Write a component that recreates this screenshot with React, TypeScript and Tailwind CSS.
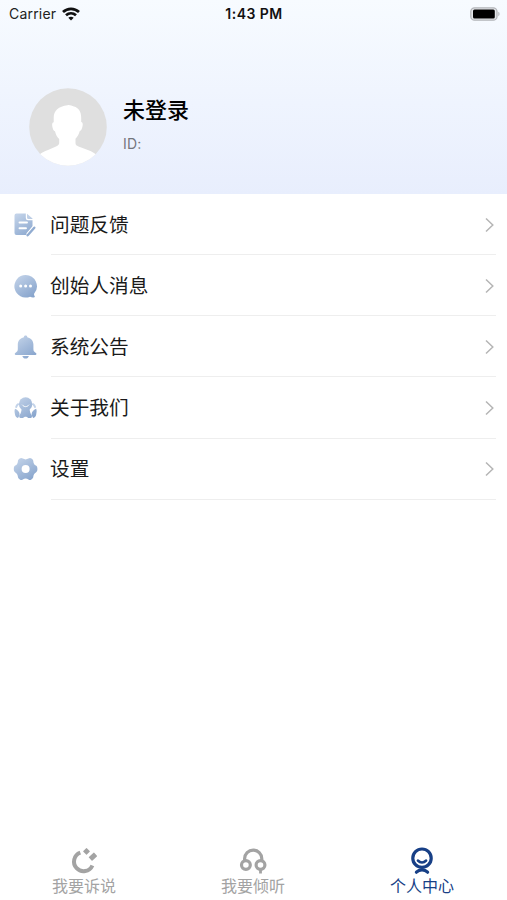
import type { ReactNode } from 'react';

const menu = [
    { label: '问题反馈', icon: <FeedbackIcon /> },
    { label: '创始人消息', icon: <MessageIcon /> },
    { label: '系统公告', icon: <BellIcon /> },
    { label: '关于我们', icon: <AboutIcon /> },
    { label: '设置', icon: <GearIcon /> },
];

const tabs = [
    { label: '我要诉说', icon: <TalkIcon />, active: false },
    { label: '我要倾听', icon: <ListenIcon />, active: false },
    { label: '个人中心', icon: <ProfileIcon />, active: true },
];

function MenuSvg({ id, children }: { id: string; children: ReactNode }) {
    return (
        <svg width="26" height="26" viewBox="0 0 26 26" fill={`url(#${id})`}>
            <defs>
                <linearGradient id={id} gradientUnits="userSpaceOnUse" x1="5" y1="2" x2="20" y2="24">
                    <stop offset="0" stopColor="#c3d3e9" />
                    <stop offset="1" stopColor="#88a5cd" />
                </linearGradient>
            </defs>
            {children}
        </svg>
    );
}

function FeedbackIcon() {
    return (
        <MenuSvg id="feedback">
            <path d="M4.500 1.500H13.800v4.500a2.200 2.200 0 0 0 2.200 2.200h4.500v6.500l-6.500 8.300H4.500a2 2 0 0 1-2-2V3.500a2 2 0 0 1 2-2z" />
            <path d="M15 1.700l5.500 4.800v.5H16.500A1.500 1.500 0 0 1 15 5.500z" opacity=".8" />
            <path d="M7.500 10.500h7.500M7.500 16.300h6.500" stroke="#fff" strokeWidth="1.900" strokeLinecap="round" />
            <path d="M22.500 15.500l-6.500 7.500" stroke="#fff" strokeWidth="4.600" />
            <path d="M22.300 15.700l-5.500 6.300-1.200 1.300" stroke="#91acd1" strokeWidth="2.400" strokeLinecap="round" />
        </MenuSvg>
    );
}

function MessageIcon() {
    return (
        <MenuSvg id="message">
            <path d="M13.600 2a11.300 11.300 0 1 0 4.500 21.700c1.600.8 2.900.9 4.300.5.500-.2.500-.7.200-1.100-.6-.8-.7-1.600-.4-2.500A11.300 11.300 0 0 0 13.600 2z" />
            <g fill="#fff">
                <circle cx="8.700" cy="13" r="1.500" />
                <circle cx="13.600" cy="13" r="1.500" />
                <circle cx="18.500" cy="13" r="1.500" />
            </g>
        </MenuSvg>
    );
}

function BellIcon() {
    return (
        <MenuSvg id="bell">
            <path d="M13.600 1.500c1 0 1.700.7 1.700 1.700 3.700.9 6.100 3.600 6.100 7.300v4.500c0 1.800.6 2.600 2.500 3.900 1 .7.500 2-.5 2H3.800c-1 0-1.500-1.300-.5-2 1.900-1.300 2.500-2.100 2.500-3.900v-4.500c0-3.700 2.400-6.400 6.100-7.300 0-1 .7-1.700 1.700-1.700z" />
            <path d="M10.300 21.900h6.600c-.5 1.600-1.700 2.700-3.300 2.700s-2.800-1.100-3.300-2.700z" />
        </MenuSvg>
    );
}

function AboutIcon() {
    return (
        <MenuSvg id="about">
            <path d="M3 13.800c2.300 1 4.200 2.500 4.500 4.700.2 1.700-.6 3.200-1.500 4.500-1.700-.3-2.700-1.600-3-3.500-.3-1.700-.8-3.800 0-5.700zM24.200 13.800c-2.300 1-4.200 2.500-4.500 4.700-.2 1.700.6 3.200 1.500 4.500 1.700-.3 2.700-1.600 3-3.500.3-1.700.8-3.800 0-5.700z" />
            <path d="M4.200 12c.3-1.300 1-2.200 2-2.800M23 12c-.3-1.300-1-2.200-2-2.800" fill="none" stroke="#c3d3e9" strokeWidth="2" strokeLinecap="round" />
            <path d="M9.600 14h8c.2 2.500.8 4.500 1.900 5.800 1 1.300.5 3.200-.8 3.200H8.500c-1.300 0-1.800-1.900-.8-3.200 1.100-1.300 1.700-3.300 1.900-5.800z" />
            <circle cx="13.600" cy="8.900" r="6.700" />
            <path d="M10.400 10c1.800 2.300 4.600 2.300 6.400 0" fill="none" stroke="#fff" strokeWidth="1" strokeLinecap="round" />
            <path d="M11 23.200c1-2 4.200-2 5.200 0z" fill="#fff" />
        </MenuSvg>
    );
}

function GearIcon() {
    return (
        <MenuSvg id="gear">
            <path
                d="M10.800 2.600c1.800 1.100 3.800 1.100 5.600 0 1.100-.7 2-.7 3 0 1.200.8 1.800 1.400 1.900 2.600.1 2 1.100 3.600 2.600 4.400 1.100.6 1.500 1.700 1.500 3.400s-.4 2.800-1.500 3.400c-1.500.8-2.500 2.400-2.600 4.400-.1 1.200-.7 1.800-1.900 2.600-1 .7-1.900.7-3 0-1.800-1.100-3.800-1.100-5.600 0-1.100.7-2 .7-3 0-1.200-.8-1.800-1.400-1.900-2.600-.1-2-1.100-3.600-2.600-4.400-1.100-.6-1.500-1.700-1.500-3.400s.4-2.800 1.500-3.400c1.500-.8 2.500-2.400 2.600-4.400.1-1.200.7-1.800 1.900-2.600 1-.7 1.900-.7 3 0z"
            />
            <circle cx="13.600" cy="13" r="4" fill="#fff" />
        </MenuSvg>
    );
}

function TalkIcon() {
    return (
        <svg width="30" height="30" viewBox="0 0 30 30" fill="none">
            <path d="M11.300 6.600A9.600 9.600 0 1 0 23.400 19.500" stroke="currentColor" strokeWidth="4" />
            <rect x="15" y="2.900" width="5" height="5" rx=".5" transform="rotate(45 17.500 5.400)" fill="currentColor" />
            <rect x="20.300" y="8.200" width="7.200" height="5" rx=".5" transform="rotate(-42 23.900 10.700)" fill="currentColor" />
        </svg>
    );
}

function ListenIcon() {
    return (
        <svg width="30" height="30" viewBox="0 0 30 30" fill="none" stroke="currentColor" strokeWidth="3.200">
            <path d="M6.600 16v-3.300a8.600 8.600 0 0 1 17.200 0v3.300" />
            <circle cx="7.900" cy="19" r="4.400" />
            <circle cx="22.500" cy="19" r="4.400" />
            <path d="M22.500 23v4.500" strokeWidth="2.800" />
        </svg>
    );
}

function ProfileIcon() {
    return (
        <svg width="30" height="30" viewBox="0 0 30 30" fill="none" stroke="currentColor" strokeWidth="3.200" strokeLinecap="round">
            <circle cx="15" cy="12.200" r="9.200" />
            <path d="M11 14.600c2.200 2.500 5.800 2.500 8 0" strokeWidth="2.700" />
            <path d="M9.400 26.200c3-3 8.200-3 11.200 0" />
        </svg>
    );
}

function Avatar() {
    return (
        <svg width="78" height="78" viewBox="0 0 78 78">
            <clipPath id="avatar">
                <circle cx="39" cy="39" r="38.800" />
            </clipPath>
            <g clipPath="url(#avatar)">
                <rect width="78" height="78" fill="#dfdfdf" />
                <path fill="#fff" d="M38.500 17.200c2.300-.5 4 .5 6.500 1.200 4.500 1.200 7.200 5.300 7.200 11v4.500c1.600.3 1.800 2 1.300 4.300-.5 2.500-1.300 4.300-2.700 4.700-.8 3.300-2.600 6-4.300 7.800v4.500c0 1.500 1 2.500 3 3.200l10 3.800c3.500 1.300 6 2.700 8.500 5V80H10V67.200c2-2.400 5.500-3.800 9-5.200l8-3.500c2.300-1 3.200-2 3.200-3.700V51c-2-2-3.500-4.500-4.200-7.800-1.500-.4-2.200-2.200-2.700-4.700-.4-2.300-.1-4 1.400-4.300v-4.500c0-7 4.800-11.500 13.800-12.500z" />
            </g>
        </svg>
    );
}

function StatusBar() {
    return (
        <div className="grid h-[27px] grid-cols-3 items-center pl-[9px] pr-[7px] text-[14px] text-[#222]">
            <div className="flex items-center gap-[6px]">
                <span className="tracking-[0.2px]">Carrier</span>
                <svg width="18" height="14" viewBox="0 0 18 14" fill="none" stroke="#111" strokeWidth="2.700">
                    <path d="M1 5c4.500-4.300 11.500-4.300 16 0M4 8.300c2.900-2.700 7.100-2.700 10 0" />
                    <path d="M9 13.500l-2.700-2.800c1.600-1.400 3.800-1.400 5.400 0z" fill="#111" stroke="none" />
                </svg>
            </div>
            <span className="-ml-[1px] text-center text-[14px] font-semibold tracking-[0.45px] text-[#111]">1:43 PM</span>
            <svg className="ml-auto" width="30" height="14" viewBox="0 0 30 14">
                <rect x=".8" y=".8" width="26.200" height="12.400" rx="3.800" fill="#e4e6ea" stroke="#b3b5b9" strokeWidth="1.300" />
                <rect x="3" y="2.600" width="21.800" height="8.800" rx="1.500" fill="#000" />
                <path d="M28.400 4.800c1.500.6 1.500 3.800 0 4.400z" fill="#aaadb1" />
            </svg>
        </div>
    );
}

export default function App() {
    return (
        <div className="flex h-[900px] w-[507px] flex-col overflow-hidden bg-white font-[Inter,'Noto_Sans_CJK_SC',sans-serif]">
            <header className="h-[194px] shrink-0 bg-linear-to-b from-[#f7fbff] to-[#e8eefd]">
                <StatusBar />
                <div className="flex gap-[16px] pl-[29px] pt-[61px]">
                    <Avatar />
                    <div className="pt-[6px]">
                        <h1 className="text-[22px] font-medium leading-8 text-black">未登录</h1>
                        <p className="mt-[8px] text-[14px] leading-5 tracking-[0.2px] text-[#73767d]">ID:</p>
                    </div>
                </div>
            </header>

            <ul className="flex-1">
                {menu.map(item => (
                    <li key={item.label} className="flex h-[61.15px] items-center pl-3 pr-[11px]">
                        {item.icon}
                        <div className="ml-[13px] flex h-full flex-1 items-center justify-between border-b border-[#eeeeee]">
                            <span className="-ml-px pt-[3px] text-[19.7px] text-[#1a1a1a]">{item.label}</span>
                            <svg className="mt-px" width="12" height="16" viewBox="0 0 12 16" fill="none" stroke="#b5b5b5" strokeWidth="1.500">
                                <path d="M2 1.500L8.800 8 2 14.500" />
                            </svg>
                        </div>
                    </li>
                ))}
            </ul>

            <nav className="grid h-[54px] shrink-0 grid-cols-3">
                {tabs.map(tab => (
                    <div key={tab.label} className={`-ml-px flex flex-col items-center ${tab.active ? 'text-[#173f86]' : 'text-[#a3a3a3]'}`}>
                        {tab.icon}
                        <span className="text-[16px] leading-5">{tab.label}</span>
                    </div>
                ))}
            </nav>
        </div>
    );
}
